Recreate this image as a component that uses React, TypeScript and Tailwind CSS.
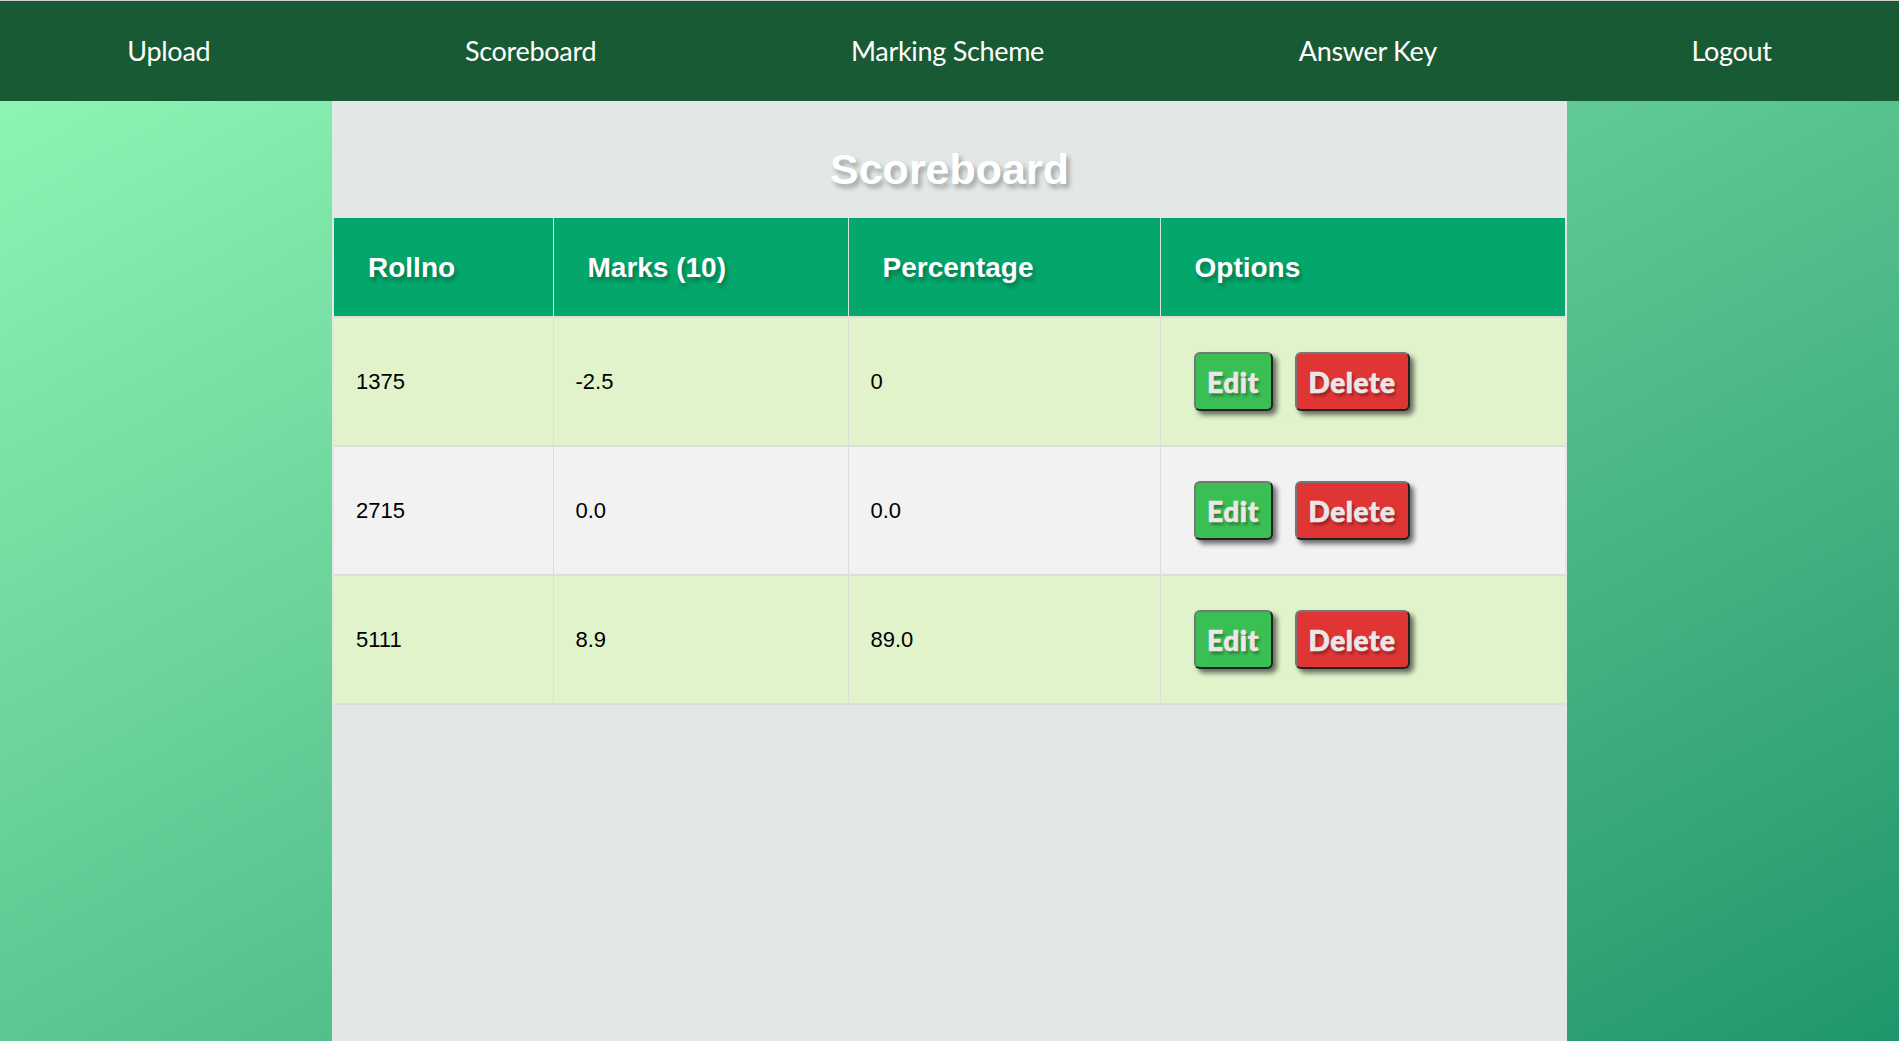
const links = ["Upload", "Scoreboard", "Marking Scheme", "Answer Key", "Logout"];

const rows = [
  { roll: "1375", marks: "-2.5", pct: "0" },
  { roll: "2715", marks: "0.0", pct: "0.0" },
  { roll: "5111", marks: "8.9", pct: "89.0" },
];

function ActionButton({ label, color }: { label: string; color: string }) {
  return (
    <button
      className={`h-[59px] px-[6px] rounded-[6px] border-2 border-t-[#777] border-l-[#777] border-r-[#222] border-b-[#222] shadow-[4px_4px_5px_rgba(0,0,0,0.55)] text-[#ede6e6] text-[28px] font-black tracking-[0.6px] [-webkit-text-stroke:0.7px_#ede6e6] [text-shadow:2px_3px_3px_rgba(0,0,0,0.35)] ${color}`}
      style={{ fontFamily: "Lato, 'Open Sans', sans-serif" }}
    >
      {label}
    </button>
  );
}

export default function App() {
  return (
    <div className="min-h-screen border-t border-[#d0d0d0] bg-gradient-to-br from-[#93f9b9] to-[#1d976c]">
      {/* Nav */}
      <nav
        className="h-[100px] bg-[#185a33] flex items-center justify-around text-white text-[27px]"
        style={{ fontFamily: "Lato, 'Open Sans', sans-serif" }}
      >
        {links.map((l) => (
          <a key={l} className="cursor-pointer tracking-[-0.3px]">{l}</a>
        ))}
      </nav>

      {/* Panel */}
      <div className="flex justify-center">
        <main
          className="w-[1235px] min-h-[940px] bg-[#e2e8e5] px-[2px]"
          style={{ fontFamily: "'Liberation Sans', Arial, sans-serif" }}
        >
          <div className="h-[117px] flex items-center justify-center pt-[20px]">
            <h1 className="text-white text-[43px] font-bold [text-shadow:3px_4px_5px_rgba(0,0,0,0.3)]">Scoreboard</h1>
          </div>

          <table className="w-full table-fixed border-collapse">
            <colgroup>
              <col className="w-[219px]" />
              <col className="w-[295px]" />
              <col className="w-[312px]" />
              <col />
            </colgroup>
            <thead>
              <tr className="h-[99px] bg-[#04a76b] text-white">
                {["Rollno", "Marks (10)", "Percentage", "Options"].map((h, i) => (
                  <th
                    key={h}
                    className={`text-left pl-[34px] pt-[2px] text-[28px] font-bold [text-shadow:2px_4px_4px_rgba(0,0,0,0.3)] ${i > 0 ? "border-l border-[#d8e8dc]" : ""}`}
                  >
                    {h}
                  </th>
                ))}
              </tr>
            </thead>
            <tbody>
              {rows.map((r, i) => (
                <tr
                  key={r.roll}
                  className={`h-[129px] border-t-2 border-[#dddddd] text-[22px] text-black ${i % 2 === 0 ? "bg-[#e0f3cb]" : "bg-[#f2f2f2]"}`}
                >
                  <td className="pl-[22px]">{r.roll}</td>
                  <td className="pl-[22px] border-l border-[#dddddd]">{r.marks}</td>
                  <td className="pl-[22px] border-l border-[#dddddd]">{r.pct}</td>
                  <td className="pl-[33px] border-l border-[#dddddd]">
                    <div className="flex items-center gap-[22px]">
                      <ActionButton label="Edit" color="bg-[#3abf55] w-[79px]" />
                      <ActionButton label="Delete" color="bg-[#df3535] w-[115px]" />
                    </div>
                  </td>
                </tr>
              ))}
              <tr className="border-t-2 border-[#dddddd]"><td colSpan={4}></td></tr>
            </tbody>
          </table>
        </main>
      </div>
    </div>
  );
}
